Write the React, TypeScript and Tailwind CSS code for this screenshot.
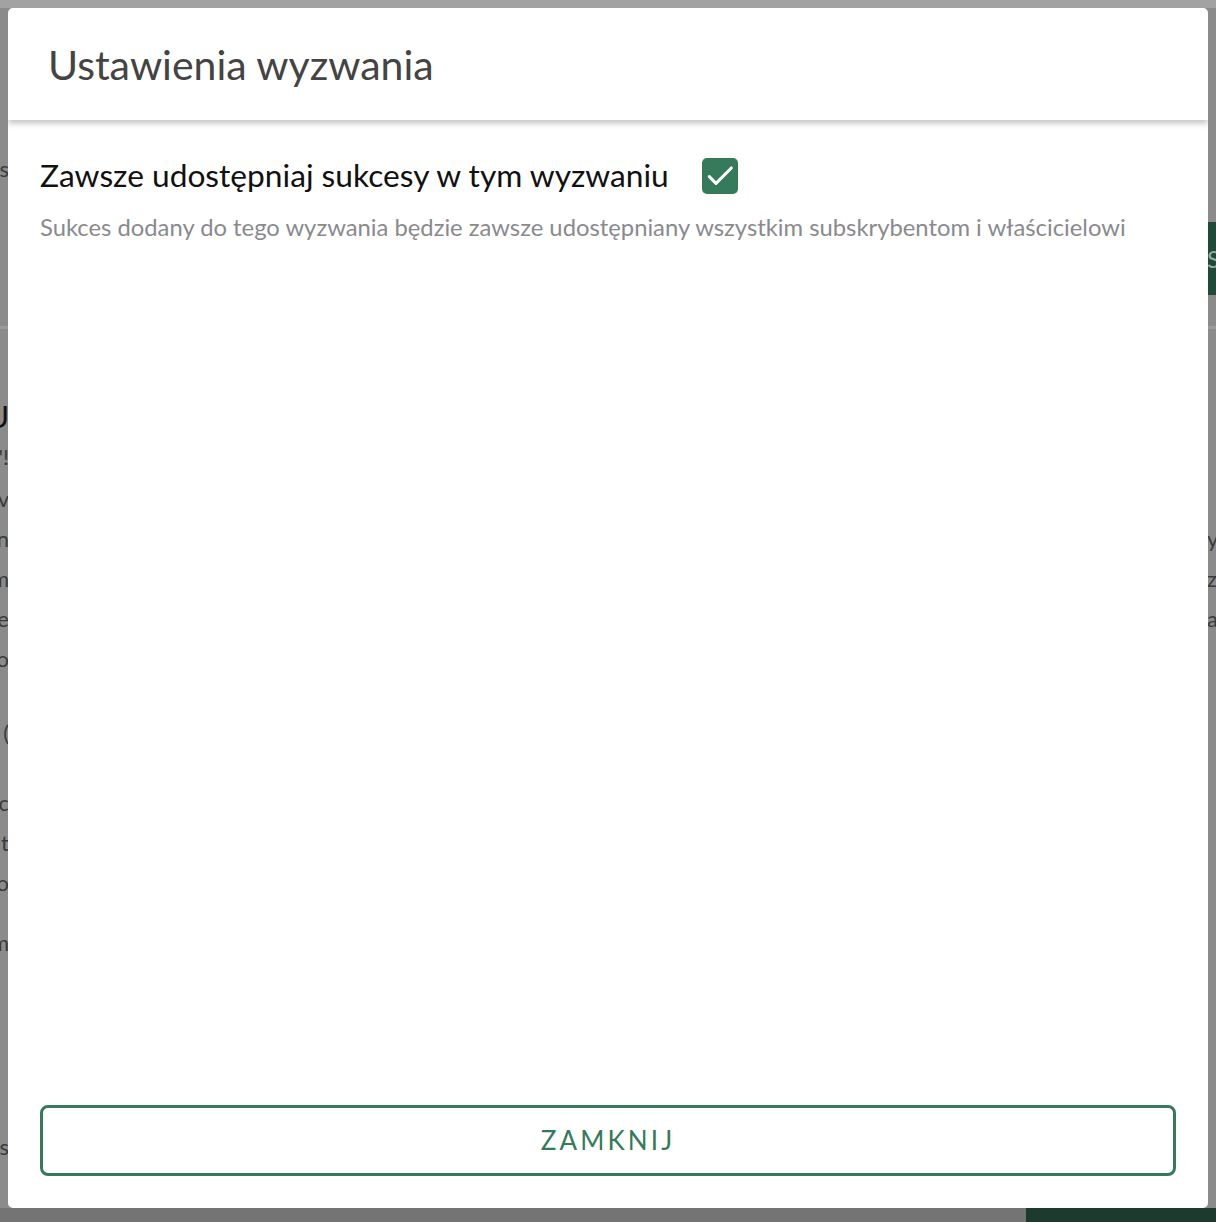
import React from "react";

const lato = { fontFamily: "Lato, 'Open Sans', sans-serif" };

function CheckBox() {
  return (
    <span className="flex h-9 w-9 shrink-0 items-center justify-center rounded-[5px] bg-[#357a5a]">
      <svg width="32" height="32" viewBox="0 0 24 24" fill="none">
        <path
          d="M4 12.5l5 5L20.5 6"
          stroke="#fff"
          strokeWidth="2.3"
          strokeLinecap="round"
          strokeLinejoin="round"
        />
      </svg>
    </span>
  );
}

// letters of the page behind the dialog that peek out at the edges
const leftBits = [
  { top: 152, text: "s", size: "text-[22px]" },
  { top: 394, text: "U", size: "text-[30px] text-[#111]" },
  { top: 440, text: "'!", size: "text-[22px]" },
  { top: 482, text: "zv", size: "text-[22px]" },
  { top: 522, text: "n", size: "text-[22px]" },
  { top: 562, text: "m", size: "text-[22px]" },
  { top: 602, text: "je", size: "text-[22px]" },
  { top: 642, text: "o", size: "text-[22px]" },
  { top: 716, text: "(", size: "text-[22px]" },
  { top: 786, text: "c", size: "text-[22px]" },
  { top: 826, text: "t", size: "text-[22px]" },
  { top: 866, text: "o", size: "text-[22px]" },
  { top: 926, text: "m", size: "text-[22px]" },
  { top: 1130, text: "s", size: "text-[22px]" },
];

const rightBits = [
  { top: 522, text: "yl" },
  { top: 562, text: "z" },
  { top: 602, text: "a" },
];

export default function App() {
  return (
    <div className="relative h-[1222px] w-full overflow-hidden bg-[#8b8b8b]" style={lato}>
      {/* dimmed page behind */}
      <div className="absolute inset-x-0 top-0 h-[8px] bg-[#a2a2a2]" />
      <div className="absolute inset-x-0 top-[326px] h-[3px] bg-[#9a9a9a]" />
      <div className="absolute right-0 top-[222px] flex h-[73px] w-[40px] items-center bg-[#1f4a37] pl-[31px] text-[24px] text-[#9aa9a1]">
        S
      </div>
      {leftBits.map((b) => (
        <div
          key={b.top}
          className={`absolute right-[calc(100%-9px)] text-[#3a3a3a] ${b.size}`}
          style={{ top: b.top }}
        >
          {b.text}
        </div>
      ))}
      {rightBits.map((b) => (
        <div
          key={b.top}
          className="absolute left-[1207px] text-[22px] text-[#3a3a3a]"
          style={{ top: b.top }}
        >
          {b.text}
        </div>
      ))}
      <div className="absolute inset-x-0 bottom-0 h-[14px] bg-[#747474]" />
      <div className="absolute bottom-0 right-0 h-[14px] w-[190px] bg-[#1d3b2d]" />

      {/* dialog */}
      <div className="relative p-2">
        <div className="flex h-[1200px] flex-col overflow-hidden rounded-[5px] bg-white">
          <div className="relative z-10 flex h-[112px] items-center pl-[40px] shadow-[0_3px_6px_rgba(0,0,0,0.25)]">
            <h2 className="text-[41px] leading-none text-[#444]">Ustawienia wyzwania</h2>
          </div>
          <div className="flex flex-1 flex-col px-8 pt-[38px] pb-8">
            <div className="flex items-center gap-[33px]">
              <span className="text-[31.7px] leading-none text-[#111]">
                Zawsze udostępniaj sukcesy w tym wyzwaniu
              </span>
              <CheckBox />
            </div>
            <p className="mt-[22px] text-[23.8px] leading-none text-[#8a8a8e]">
              Sukces dodany do tego wyzwania będzie zawsze udostępniany wszystkim subskrybentom i
              właścicielowi
            </p>
            <div className="flex-1" />
            <button className="h-[71px] w-full rounded-lg border-[3px] border-[#357a5a] text-[26px] tracking-[0.12em] text-[#357a5a]">
              ZAMKNIJ
            </button>
          </div>
        </div>
      </div>
    </div>
  );
}
